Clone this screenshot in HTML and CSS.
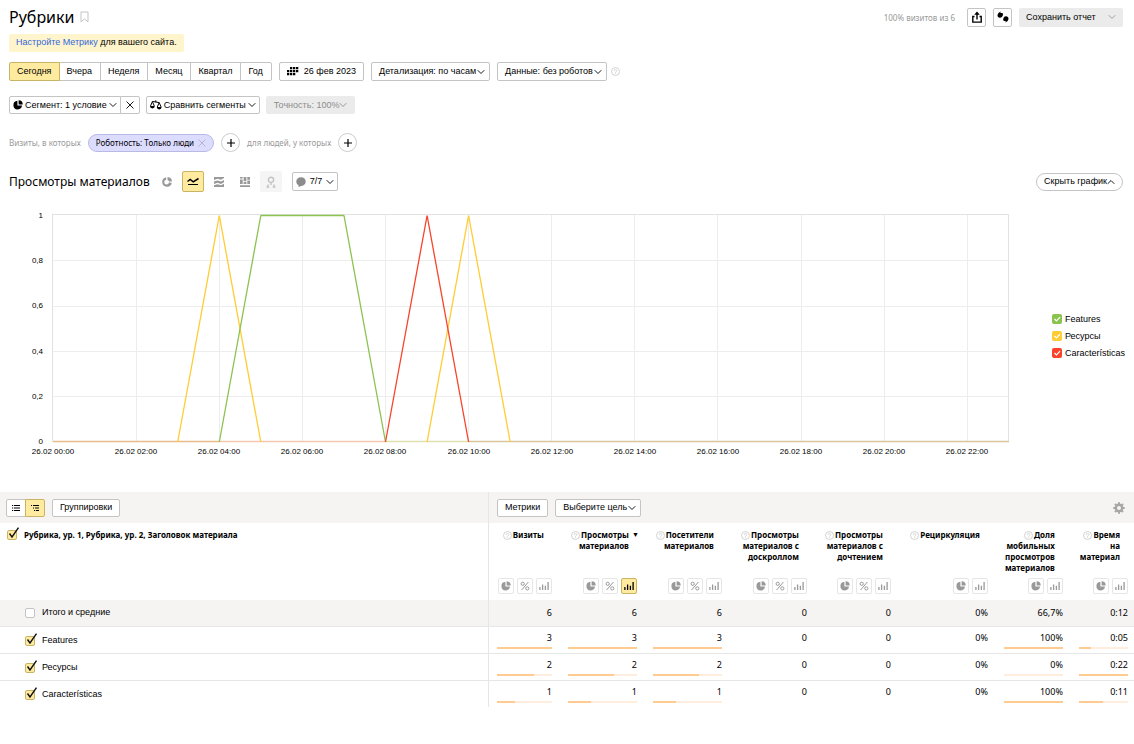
FILE: index.html
```
<!DOCTYPE html>
<html lang="ru">
<head>
<meta charset="utf-8">
<title>Рубрики</title>
<link rel="stylesheet" href="styles.css">
</head>
<body>
<svg class="sprite" aria-hidden="true">
  <symbol id="down" viewBox="0 0 8 6"><path d="M.7 1.200 4 4.500 7.300 1.200" fill="none" stroke="currentColor" stroke-width=".9"/></symbol>
  <symbol id="up" viewBox="0 0 8 6"><path d="M.7 4.800 4 1.500 7.300 4.800" fill="none" stroke="currentColor" stroke-width=".9"/></symbol>
  <symbol id="cross" viewBox="0 0 8 8"><path d="m.5.500 7 7M7.500.500l-7 7" fill="none" stroke="currentColor" stroke-width=".9"/></symbol>
  <symbol id="plus" viewBox="0 0 8 8"><path d="M4 0v8M0 4h8" fill="none" stroke="currentColor" stroke-width="1.200"/></symbol>
  <symbol id="pie" viewBox="0 0 10 10"><path d="M4.400.8A4.300 4.300 0 1 0 9 5.600H4.400z" fill="currentColor"/><path d="M5.600.3v4.100h4.100A4.200 4.200 0 0 0 5.600.3z" fill="currentColor"/></symbol>
  <symbol id="percent" viewBox="0 0 10 10"><g fill="none" stroke="currentColor"><circle cx="2.700" cy="2.800" r="1.600"/><circle cx="7.300" cy="7.400" r="1.600"/><path d="M8.400 1 1.600 9"/></g></symbol>
  <symbol id="bars" viewBox="0 0 10 10"><path d="M.9 9V6M3.600 9V3.400M6.400 9V4.800M9.100 9V1" fill="none" stroke="currentColor" stroke-width="1.300"/></symbol>
  <symbol id="help" viewBox="0 0 9 9"><g fill="none" stroke="currentColor" stroke-width=".8"><circle cx="4.500" cy="4.500" r="4"/><path d="M3.200 3.800c0-2 2.700-1.700 2.600-.1 0 .9-1.300.9-1.300 1.900M4.500 6.200v.9"/></g></symbol>
</svg>

<header class="head">
  <h1>Рубрики</h1>
  <svg class="bookmark" viewBox="0 0 9 12"><path d="M1 1h7v9.800L4.500 8 1 10.800z" fill="none" stroke="#c4c4c4"/></svg>
  <span class="visits">100% визитов из 6</span>
  <button class="btn square" aria-label="Экспорт"><svg class="i12" viewBox="0 0 12 12"><path d="M3.500 5.500H1.800v5.600h8.400V5.500H8.500M6 8.500V2" fill="none" stroke="#000" stroke-width="1.400"/><path d="M3.200 3.800 6 .4l2.800 3.400z"/></svg></button>
  <button class="btn square" aria-label="Комментарии"><svg class="i12" viewBox="0 0 12 12"><path d="M3.800.600 3.300 2h1.400c.8 0 1.300.5 1.300 1.300 0 1.900-1.200 3.500-3.200 3.500C1.300 6.800.5 5.800.5 4.600.5 2.800 2 1.200 3.800.600zM7 6.200c.4-.5 1-.9 2-.9 1.500 0 2.500 1 2.500 2.300 0 1.800-1.300 3.300-3.200 3.900L8.800 10H7.500C6.600 10 6.200 9.400 6.200 8.500c0-.9.300-1.700.8-2.300z"/></svg></button>
  <button class="btn save">Сохранить отчет <svg class="arr"><use href="#down"/></svg></button>
</header>

<p class="notice"><a href="#">Настройте Метрику</a> для вашего сайта.</p>

<div class="row period">
  <div class="group">
    <button class="btn on">Сегодня</button><button class="btn">Вчера</button><button class="btn">Неделя</button><button class="btn">Месяц</button><button class="btn">Квартал</button><button class="btn">Год</button>
  </div>
  <button class="btn date"><svg viewBox="0 0 12 9"><path d="M3 0h2.300v2.300H3zM6 0h2.300v2.300H6zM9 0h2.300v2.300H9zM0 3h2.300v2.300H0zM3 3h2.300v2.300H3zM6 3h2.300v2.300H6zM9 3h2.300v2.300H9zM0 6h2.300v2.300H0zM3 6h2.300v2.300H3zM6 6h2.300v2.300H6z"/></svg>26 фев 2023</button>
  <button class="btn drop">Детализация: по часам<svg class="arr"><use href="#down"/></svg></button>
  <button class="btn drop">Данные: без роботов<svg class="arr"><use href="#down"/></svg></button>
  <svg class="help"><use href="#help"/></svg>
</div>

<div class="row segment">
  <div class="group">
    <button class="btn tight"><svg class="i10"><use href="#pie"/></svg>Сегмент: 1 условие<svg class="arr"><use href="#down"/></svg></button><button class="btn clear" aria-label="Очистить"><svg class="i8"><use href="#cross"/></svg></button>
  </div>
  <button class="btn tight"><svg class="scales" viewBox="0 0 12 10"><path d="M0 6h4.800a2.400 2.400 0 0 1-4.800 0zM6.800 7h4.800a2.400 2.400 0 0 1-4.800 0z"/><path d="M.5 6 2.400 1.600 4.300 6M7.300 7l1.900-4.400L11.100 7M2.400 1.400l6.800 1.200M5.800.3v2" fill="none" stroke="#000" stroke-width="1"/></svg>Сравнить сегменты<svg class="arr"><use href="#down"/></svg></button>
  <button class="btn off" disabled>Точность: 100%<svg class="arr"><use href="#down"/></svg></button>
</div>

<div class="row filter">
  <span>Визиты, в которых</span>
  <button class="chip">Роботность: Только люди<svg class="i8"><use href="#cross"/></svg></button>
  <button class="round" aria-label="Добавить условие"><svg class="i8"><use href="#plus"/></svg></button>
  <span>для людей, у которых</span>
  <button class="round" aria-label="Добавить людей"><svg class="i8"><use href="#plus"/></svg></button>
</div>

<div class="row chart-head">
  <h2>Просмотры материалов</h2>
  <div class="types">
    <button class="type" aria-label="Круг"><svg class="i12" viewBox="0 0 12 12"><path d="M5 1.300A4.800 4.800 0 1 0 10.700 7L8 6.300A2.400 2.400 0 1 1 5.300 3.700z" fill="#999"/><path d="M6.500 1.100v2.700L8.300 5.600H11a4.800 4.800 0 0 0-4.500-4.500z" fill="#999"/></svg></button>
    <button class="type on" aria-label="Линии"><svg class="i12" viewBox="0 0 12 12"><path d="m.5 5.500 2.700-2 3 2.300 5.300-3.300" fill="none" stroke="#000" stroke-width="1.500"/><path d="M1 8.500h10" stroke="#000"/></svg></button>
    <button class="type" aria-label="Области"><svg class="i12" viewBox="0 0 12 12"><path d="M1 1h10v1L8 3.700 4.500 2.800 1 4zM1 5.500l3.500-1 3.500 1 3-1.500v2.300L8 8 4.500 6.800 1 8zM1 9.300l3.500-1 3.500 1 3-1.500V11H1z" fill="#999"/></svg></button>
    <button class="type" aria-label="Колонки"><svg class="i12" viewBox="0 0 12 12"><path d="M1 1h2.700v1.600H1zM1 3.400h2.700V8H1zM4.600 1h2.800v4.300H4.600zM4.600 6h2.800v2H4.600zM8.300 1H11v2.800H8.300zM8.300 4.600H11V8H8.300zM1 9.200h10V11H1z" fill="#999"/></svg></button>
    <button class="type off" aria-label="Карта" disabled><svg class="i12" viewBox="0 0 12 12"><g fill="none" stroke="#c4c4c4" stroke-width="1.400"><circle cx="6" cy="3.800" r="2.600"/><path d="M6 6.400V9M3.300 8.500 2.300 11h2M8.700 8.500l1 2.500h-2"/></g></svg></button>
  </div>
  <button class="btn count"><svg class="i10" viewBox="0 0 10 10"><path d="M5 .3c3 0 4.700 1.900 4.700 4.300S8 9 5.300 9L2.500 10V8.300C1.100 7.500.3 6.200.3 4.600.3 2.200 2.200.3 5 .3z" fill="#8c8c8c"/></svg>7/7<svg class="arr"><use href="#down"/></svg></button>
  <button class="hide">Скрыть график<svg class="arr"><use href="#up"/></svg></button>
</div>

<section class="chart">
  <svg class="plot" viewBox="0 204 1040 264" role="img" aria-label="Просмотры материалов по часам">
    <g stroke="#ededed" fill="none">
      <path d="M53 260.500h956M53 306.500h956M53 351.500h956M53 396.500h956M136.500 215v227M219.500 215v227M302.500 215v227M385.500 215v227M468.500 215v227M551.500 215v227M634.500 215v227M717.500 215v227M801.500 215v227M884.500 215v227M967.500 215v227"/>
      <rect x="52.500" y="214.500" width="956" height="227" stroke="#e2e2e2"/>
    </g>
    <g fill="none" stroke-width="1.300" stroke-linejoin="bevel">
      <path d="M53 441.500h166" stroke="#e6bd88"/>
      <path d="M219 441.500h167" stroke="#f5c6b2"/>
      <path d="M386 441.500h83" stroke="#dfe2ae"/>
      <path d="M469 441.500h540" stroke="#dcc59a"/>
      <path d="m177.700 442 41.600-226.500L260.800 442M427.100 442l41.500-226.500L510.200 442" stroke="#fc3"/>
      <path d="m219.300 442 41.500-226.500h83.200L385.500 442" stroke="#8bc34f"/>
      <path d="m385.500 442 41.600-226.500L468.600 442" stroke="#f9432a"/>
    </g>
    <g class="axis" text-anchor="end">
      <text x="43" y="218">1</text><text x="43" y="263">0,8</text><text x="43" y="308">0,6</text><text x="43" y="354">0,4</text><text x="43" y="399">0,2</text><text x="43" y="444">0</text>
    </g>
    <g class="axis" text-anchor="middle">
      <text x="53" y="454">26.02 00:00</text><text x="136" y="454">26.02 02:00</text><text x="219" y="454">26.02 04:00</text><text x="302" y="454">26.02 06:00</text><text x="385" y="454">26.02 08:00</text><text x="469" y="454">26.02 10:00</text><text x="552" y="454">26.02 12:00</text><text x="635" y="454">26.02 14:00</text><text x="718" y="454">26.02 16:00</text><text x="801" y="454">26.02 18:00</text><text x="884" y="454">26.02 20:00</text><text x="967" y="454">26.02 22:00</text>
    </g>
  </svg>
  <div class="legend">
    <label><input type="checkbox" class="tick green" checked>Features</label>
    <label><input type="checkbox" class="tick yellow" checked>Ресурсы</label>
    <label><input type="checkbox" class="tick red" checked>Características</label>
  </div>
</section>

<table class="data">
  <colgroup><col><col class="w71"><col class="w85"><col class="w85"><col class="w85"><col class="w84"><col class="w97"><col class="w75"><col class="w63"></colgroup>
  <thead>
    <tr class="tools">
      <td><div class="bar left">
        <div class="group">
          <button class="btn mode" aria-label="Список"><svg class="mi" viewBox="0 0 10 8"><path d="M1 1.500h1.200M1 4h1.200M1 6.500h1.200M3 1.500h6M3 4h6M3 6.500h6" stroke="#000"/></svg></button><button class="btn mode on" aria-label="Дерево"><svg class="mi" viewBox="0 0 10 8"><path d="M1 1.500h1M3 1.500h6M3 4h1M5 4h4M4 6.500h1.200M6 6.500h3" stroke="#000"/></svg></button>
        </div>
        <button class="btn">Группировки</button>
      </div></td>
      <td colspan="8"><div class="bar">
        <button class="btn">Метрики</button>
        <button class="btn drop">Выберите цель<svg class="arr"><use href="#down"/></svg></button>
        <svg class="gear" viewBox="0 0 12 12"><circle cx="6" cy="6" r="3.200" fill="none" stroke="#a6a6a6" stroke-width="2.400"/><path d="M6 .3v2M6 9.700v2M.3 6h2M9.700 6h2M2 2l1.400 1.400M8.600 8.600 10 10M10 2 8.600 3.400M3.400 8.600 2 10" stroke="#a6a6a6" stroke-width="2"/></svg>
      </div></td>
    </tr>
    <tr class="names">
      <th scope="col" class="dim"><label><input type="checkbox" class="box" checked>Рубрика, ур. 1, Рубрика, ур. 2, Заголовок материала</label></th>
      <th scope="col"><svg class="help"><use href="#help"/></svg>Визиты</th>
      <th scope="col" class="sorted"><svg class="help"><use href="#help"/></svg>Просмотры материалов</th>
      <th scope="col"><svg class="help"><use href="#help"/></svg>Посетители материалов</th>
      <th scope="col"><svg class="help"><use href="#help"/></svg>Просмотры материалов с доскроллом</th>
      <th scope="col"><svg class="help"><use href="#help"/></svg>Просмотры материалов с дочтением</th>
      <th scope="col"><svg class="help"><use href="#help"/></svg>Рециркуляция</th>
      <th scope="col"><svg class="help"><use href="#help"/></svg>Доля мобильных просмотров материалов</th>
      <th scope="col"><svg class="help"><use href="#help"/></svg>Время на материал</th>
    </tr>
    <tr class="views">
      <td></td>
      <td><div class="set"><button aria-label="Доля"><svg class="i10"><use href="#pie"/></svg></button><button aria-label="Процент"><svg class="i10"><use href="#percent"/></svg></button><button aria-label="Столбцы"><svg class="i10"><use href="#bars"/></svg></button></div></td>
      <td><div class="set"><button aria-label="Доля"><svg class="i10"><use href="#pie"/></svg></button><button aria-label="Процент"><svg class="i10"><use href="#percent"/></svg></button><button class="on" aria-label="Столбцы"><svg class="i10"><use href="#bars"/></svg></button></div></td>
      <td><div class="set"><button aria-label="Доля"><svg class="i10"><use href="#pie"/></svg></button><button aria-label="Процент"><svg class="i10"><use href="#percent"/></svg></button><button aria-label="Столбцы"><svg class="i10"><use href="#bars"/></svg></button></div></td>
      <td><div class="set"><button aria-label="Доля"><svg class="i10"><use href="#pie"/></svg></button><button aria-label="Процент"><svg class="i10"><use href="#percent"/></svg></button><button aria-label="Столбцы"><svg class="i10"><use href="#bars"/></svg></button></div></td>
      <td><div class="set"><button aria-label="Доля"><svg class="i10"><use href="#pie"/></svg></button><button aria-label="Процент"><svg class="i10"><use href="#percent"/></svg></button><button aria-label="Столбцы"><svg class="i10"><use href="#bars"/></svg></button></div></td>
      <td><div class="set"><button aria-label="Доля"><svg class="i10"><use href="#pie"/></svg></button><button aria-label="Столбцы"><svg class="i10"><use href="#bars"/></svg></button></div></td>
      <td><div class="set"><button aria-label="Доля"><svg class="i10"><use href="#pie"/></svg></button><button aria-label="Столбцы"><svg class="i10"><use href="#bars"/></svg></button></div></td>
      <td><div class="set"><button aria-label="Доля"><svg class="i10"><use href="#pie"/></svg></button><button aria-label="Столбцы"><svg class="i10"><use href="#bars"/></svg></button></div></td>
    </tr>
  </thead>
  <tbody>
    <tr class="total"><td class="dim"><label><input type="checkbox" class="box">Итого и средние</label></td><td>6</td><td>6</td><td>6</td><td>0</td><td>0</td><td>0%</td><td>66,7%</td><td>0:12</td></tr>
    <tr><td class="dim"><label><input type="checkbox" class="box" checked>Features</label></td><td>3<i class="meter"><b style="width:100%"></b></i></td><td>3<i class="meter"><b style="width:100%"></b></i></td><td>3<i class="meter"><b style="width:100%"></b></i></td><td>0</td><td>0</td><td>0%</td><td>100%<i class="meter"><b style="width:100%"></b></i></td><td>0:05<i class="meter"><b style="width:24%"></b></i></td></tr>
    <tr><td class="dim"><label><input type="checkbox" class="box" checked>Ресурсы</label></td><td>2<i class="meter"><b style="width:67%"></b></i></td><td>2<i class="meter"><b style="width:67%"></b></i></td><td>2<i class="meter"><b style="width:67%"></b></i></td><td>0</td><td>0</td><td>0%</td><td>0%<i class="meter"><b style="width:0%"></b></i></td><td>0:22<i class="meter"><b style="width:100%"></b></i></td></tr>
    <tr><td class="dim"><label><input type="checkbox" class="box" checked>Características</label></td><td>1<i class="meter"><b style="width:33%"></b></i></td><td>1<i class="meter"><b style="width:33%"></b></i></td><td>1<i class="meter"><b style="width:33%"></b></i></td><td>0</td><td>0</td><td>0%</td><td>100%<i class="meter"><b style="width:100%"></b></i></td><td>0:11<i class="meter"><b style="width:49%"></b></i></td></tr>
  </tbody>
</table>
</body>
</html>
```
FILE: styles.css
```
* { box-sizing: border-box; }
body { margin: 0; background: #fff; color: #000; font: 9px/11px "Liberation Sans", Arial, sans-serif; }
button { margin: 0; padding: 0; border: 0; background: none; color: inherit; font: inherit; white-space: nowrap; }
h1, h2, p { margin: 0; font-weight: normal; }
svg { flex: none; display: block; }
.sprite { position: absolute; width: 0; height: 0; }
.arr { width: 8px; height: 6px; }
.i8 { width: 8px; height: 8px; }
.i10 { width: 10px; height: 10px; }
.i12 { width: 12px; height: 12px; }
.help { width: 9px; height: 9px; color: #c8c8c8; }

.btn { display: flex; align-items: center; justify-content: center; height: 19px; padding: 0 7px; border: 1px solid #c4c4c4; border-radius: 2px; background: #fff; }
.btn.drop { gap: 1px; padding-right: 4px; }
.btn.on { position: relative; background: #ffeba0; border-color: #c9b466; }
.btn.off { background: #ebebeb; border-color: #ebebeb; color: #8c8c8c; }
.btn.square { width: 19px; padding: 0; }
.group { display: flex; }
.group .btn + .btn { margin-left: -1px; border-radius: 0; }
.group .btn:first-child { border-radius: 2px 0 0 2px; }
.group .btn:last-child { border-radius: 0 2px 2px 0; }

.head { display: flex; align-items: center; height: 34px; padding: 0 11px 0 9px; }
.head h1 { font: 16px/24px "Noto Sans", sans-serif; }
.bookmark { width: 9px; height: 12px; margin-left: 6px; }
.visits { margin-left: auto; margin-right: 12px; color: #999; font: 8px/11px "Noto Sans", sans-serif; }
.head .btn { margin-right: 7px; }
.head .save { width: 104px; margin-right: 0; justify-content: space-between; padding: 0 6px; background: #ebebeb; border-color: #ebebeb; }
.save .arr { color: #999; }

.notice { width: fit-content; margin-left: 9px; padding: 3px 7px 4px; border-radius: 2px; background: #fff5cc; }
.notice a { color: #3366dd; text-decoration: none; }

.row { display: flex; align-items: center; padding: 0 11px 0 9px; }
.period { margin-top: 10px; }
.period .group .btn + .btn { padding-right: 8px; }
.period > .btn { margin-left: 7px; }
.period > .help { margin-left: 4px; }
.date svg { width: 12px; height: 9px; margin-right: 5px; }
.segment { margin-top: 15px; gap: 6px; }
.segment .btn { height: 18px; }
.btn.tight { padding: 0 3px; gap: 2px; }
.segment .clear { width: 20px; padding: 0; }
.scales { width: 12px; height: 10px; }

.filter { margin-top: 19px; gap: 7px; color: #999; font: 8px/11px "Noto Sans", sans-serif; }
.chip { display: flex; align-items: center; gap: 4px; height: 18px; padding: 0 7px; border: 1px solid #b9b9e6; border-radius: 9px; background: #dcdcff; color: #000; }
.chip svg { color: #b0b0cc; }
.round { display: flex; align-items: center; justify-content: center; width: 19px; height: 19px; border: 1px solid #ccc; border-radius: 50%; color: #000; }

.chart-head { margin-top: 19px; }
.chart-head h2 { font: 12px/18px "Noto Sans", sans-serif; }
.types { display: flex; gap: 4px; margin-left: 6px; }
.type { display: flex; align-items: center; justify-content: center; width: 22px; height: 21px; border: 1px solid transparent; border-radius: 2px; }
.type.on { background: #ffeba0; border-color: #c9b466; }
.type.off { background: #f5f5f5; }
.btn.count { margin-left: 10px; padding: 0 3px; gap: 4px; }
.hide { display: flex; align-items: center; height: 18px; margin-left: auto; padding: 0 7px; border: 1px solid #c4c4c4; border-radius: 9px; }

.chart { display: flex; align-items: center; margin-top: 12px; }
.plot { flex: 1; min-width: 0; height: auto; }
.axis { font: 8px "Liberation Sans", Arial, sans-serif; }
.legend { display: flex; flex-direction: column; gap: 6px; width: 82px; margin-left: 12px; }
.legend label { display: flex; align-items: center; gap: 3px; }
.tick, .box { appearance: none; flex: none; margin: 0; width: 10px; height: 10px; border-radius: 2px; background: no-repeat center; }
.tick { background-image: url("data:image/svg+xml,%3Csvg xmlns='http://www.w3.org/2000/svg' viewBox='0 0 10 10'%3E%3Cpath d='M2.500 5 4.500 7 8 3.200' fill='none' stroke='%23fff' stroke-width='1.200'/%3E%3C/svg%3E"); }
.green { background-color: #8bc34f; }
.yellow { background-color: #fc3; }
.red { background-color: #f9432a; }

.data { width: 100%; margin-top: 24px; border-collapse: separate; border-spacing: 0; table-layout: fixed; }
.w63 { width: 63px; }
.w71 { width: 71px; }
.w75 { width: 75px; }
.w84 { width: 84px; }
.w85 { width: 85px; }
.w97 { width: 97px; }
.data td, .data th { padding: 0 8px; text-align: right; vertical-align: top; font-family: "Noto Sans", sans-serif; }
.data td:first-child, .data th:first-child { border-right: 1px solid #e6e6e6; text-align: left; }
.data td:first-child { font-family: "Liberation Sans", Arial, sans-serif; }
.data td:last-child { padding-right: 6px; }
.tools td { background: #f5f4f2; }
.bar { display: flex; align-items: center; gap: 7px; height: 31px; }
.bar .btn { height: 18px; font-family: "Liberation Sans", Arial, sans-serif; }
.data .tools td:first-child { padding-left: 6px; }
.bar .mode { width: 20px; padding: 0; }
.mi { width: 10px; height: 8px; }
.gear { width: 12px; height: 12px; margin-left: auto; margin-right: 3px; }
.names th { height: 53px; font-size: 8px; font-weight: bold; }
.data .names th { padding-top: 6px; padding-right: 16px; }
.data .names th:first-child { padding-left: 7px; }
.data .names th:last-child { padding-right: 14px; padding-left: 4px; }
.names .help { display: inline-block; vertical-align: -2px; margin-right: 1px; }
.sorted { position: relative; }
.sorted::after { content: "▼"; position: absolute; right: 6px; top: 6px; font-size: 7px; }
.views td { height: 24px; }
.set { display: flex; justify-content: flex-end; gap: 3px; padding-top: 2px; }
.set button { display: flex; align-items: center; justify-content: center; width: 16px; height: 16px; border: 1px solid #e6e6e6; border-radius: 2px; color: #999; }
.set .on { background: #ffeba0; border-color: #c9b466; color: #000; }
.data tbody td { height: 27px; padding-top: 5px; border-top: 1px solid #e6e6e6; }
.data tbody .total td { height: 26px; padding-top: 7px; border-top: 0; background: #f5f4f2; }
.data tbody .dim { padding-left: 25px; padding-top: 8px; }
.dim label { display: flex; align-items: center; gap: 7px; }
.box { border: 1px solid #c4c4c4; background-color: #fff; }
.box:checked { position: relative; background-color: #ffeba0; border-color: #c9b466; }
.box:checked::after { content: ""; position: absolute; left: 0; top: -4px; width: 12px; height: 12px; background: url("data:image/svg+xml,%3Csvg xmlns='http://www.w3.org/2000/svg' viewBox='0 0 12 12'%3E%3Cpath d='M1.500 6.500 4 10 10.500.7' fill='none' stroke='%23111' stroke-width='1.400'/%3E%3C/svg%3E"); }
.meter { display: block; height: 2px; margin-top: 4px; background: #ffeedd; }
.meter b { display: block; height: 2px; background: #ffcb91; }
```
